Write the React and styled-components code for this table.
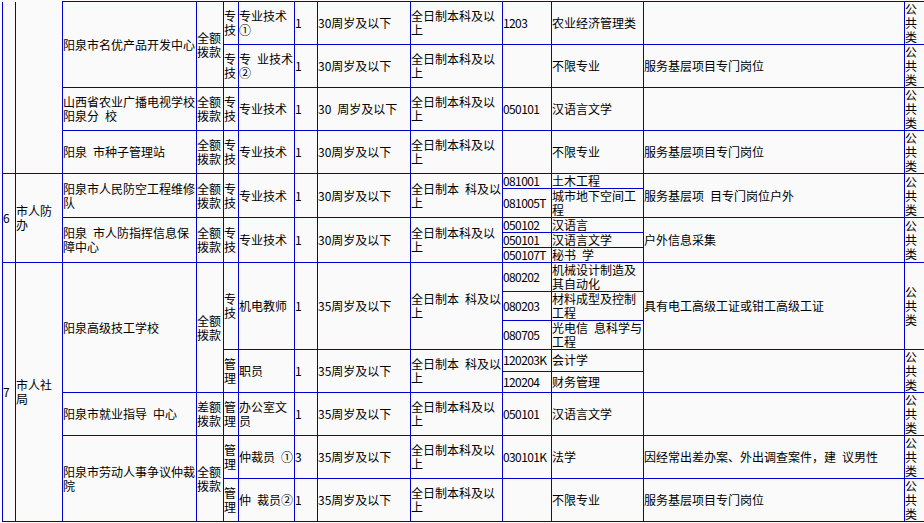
import React from "react";
import styled, { createGlobalStyle } from "styled-components";

const Global = createGlobalStyle`
  html, body {
    margin: 0;
    padding: 0;
    overflow: hidden;
    background: #fafafa;
  }
`;

const Page = styled.div`
  box-sizing: border-box;
  width: 924px;
  height: 523px;
  padding: 1px 0 0 2px;
  overflow: hidden;
  background: #fafafa;
`;

const Table = styled.table`
  border-collapse: collapse;
  table-layout: fixed;
  width: 942px;
  min-width: 942px;
  font-family: "Noto Sans CJK SC", "Noto Sans", sans-serif;
  font-size: 12px;
  line-height: 14px;
  color: #000;
`;

const Cell = styled.td`
  border: 1px solid #0000cc;
  border-top-style: ${(p) => (p.$noTop ? "none" : "solid")};
  padding: 0;
  vertical-align: middle;
  text-align: left;
  font-weight: 400;
  letter-spacing: ${(p) => (p.$code ? "-0.6px" : "0")};
  white-space: ${(p) => (p.$code ? "nowrap" : "normal")};
`;

const Narrow = styled.span`
  display: block;
  width: 14px;
`;

const S = "\u2002";

const widths = [13, 47, 134, 27, 15, 56, 23, 93, 92, 49, 92, 261, 40];

const isCode = (t) => /^[0-9]{4,}[A-Z]?$/.test(t);

const rows = [
  [
    { t: "", rs: 4, noTop: true },
    { t: "", rs: 4, noTop: true },
    { t: "阳泉市名优产品开发中心", rs: 2 },
    { t: "全额拨款", rs: 2 },
    "专技", "专业技术①", "1", "30周岁及以下", "全日制本科及以上", "1203", "农业经济管理类", "", "公共类",
  ],
  ["专技", `专${S}业技术②`, "1", "30周岁及以下", "全日制本科及以上", "", "不限专业", "服务基层项目专门岗位", "公共类"],
  [`山西省农业广播电视学校阳泉分${S}校`, "全额拨款", "专技", "专业技术", "1", `30${S}周岁及以下`, "全日制本科及以上", "050101", "汉语言文学", "", "公共类"],
  [`阳泉${S}市种子管理站`, "全额拨款", "专技", "专业技术", "1", "30周岁及以下", "全日制本科及以上", "", "不限专业", "服务基层项目专门岗位", "公共类"],
  [
    { t: "6", rs: 5 },
    { t: "市人防办", rs: 5 },
    { t: "阳泉市人民防空工程维修队", rs: 2 },
    { t: "全额拨款", rs: 2 },
    { t: "专技", rs: 2 },
    { t: "专业技术", rs: 2 },
    { t: "1", rs: 2 },
    { t: "30周岁及以下", rs: 2 },
    { t: `全日制本${S}科及以上`, rs: 2 },
    "081001", "土木工程",
    { t: `服务基层项${S}目专门岗位户外`, rs: 2 },
    { t: "公共类", rs: 2 },
  ],
  ["081005T", "城市地下空间工程"],
  [
    { t: `阳泉${S}市人防指挥信息保障中心`, rs: 3 },
    { t: "全额拨款", rs: 3 },
    { t: "专技", rs: 3 },
    { t: "专业技术", rs: 3 },
    { t: "1", rs: 3 },
    { t: "30周岁及以下", rs: 3 },
    { t: "全日制本科及以上", rs: 3 },
    "050102", "汉语言",
    { t: "户外信息采集", rs: 3 },
    { t: "公共类", rs: 3 },
  ],
  ["050101", "汉语言文学"],
  ["050107T", `秘书${S}学`],
  [
    { t: "7", rs: 8 },
    { t: "市人社局", rs: 8 },
    { t: "阳泉高级技工学校", rs: 5 },
    { t: "全额拨款", rs: 5 },
    { t: "专技", rs: 3 },
    { t: "机电教师", rs: 3 },
    { t: "1", rs: 3 },
    { t: "35周岁及以下", rs: 3 },
    { t: `全日制本${S}科及以上`, rs: 3 },
    "080202", "机械设计制造及其自动化",
    { t: "具有电工高级工证或钳工高级工证", rs: 3 },
    { t: "公共类", rs: 3 },
  ],
  ["080203", "材料成型及控制工程"],
  ["080705", `光电信${S}息科学与工程`],
  [
    { t: "管理", rs: 2 },
    { t: "职员", rs: 2 },
    { t: "1", rs: 2 },
    { t: "35周岁及以下", rs: 2 },
    { t: `全日制本${S}科及以上`, rs: 2 },
    "120203K", "会计学",
    { t: "", rs: 2 },
    { t: "公共类", rs: 2 },
  ],
  ["120204", "财务管理"],
  [`阳泉市就业指导${S}中心`, "差额拨款", "管理", "办公室文员", "1", "35周岁及以下", "全日制本科及以上", "050101", "汉语言文学", "", "公共类"],
  [
    { t: "阳泉市劳动人事争议仲裁院", rs: 2 },
    { t: "全额拨款", rs: 2 },
    "管理", `仲裁员${S}①`, "3", "35周岁及以下", "全日制本科及以上", "030101K", "法学",
    `因经常出差办案、外出调查案件，建${S}议男性`, "公共类",
  ],
  ["管理", `仲${S}裁员②`, "1", "35周岁及以下", "全日制本科及以上", "", "不限专业", "服务基层项目专门岗位", "公共类"],
];

export default function App() {
  return (
    <>
      <Global />
      <Page>
        <Table>
          <colgroup>
            {widths.map((w, i) => (
              <col key={i} style={{ width: w }} />
            ))}
          </colgroup>
          <tbody>
            {rows.map((r, ri) => (
              <tr key={ri}>
                {r.map((c, ci) => {
                  const cell = typeof c === "string" ? { t: c } : c;
                  const last = cell.t === "公共类";
                  return (
                    <Cell
                      key={ci}
                      rowSpan={cell.rs || 1}
                      $noTop={cell.noTop}
                      $code={isCode(cell.t)}
                    >
                      {last ? <Narrow>{cell.t}</Narrow> : cell.t}
                    </Cell>
                  );
                })}
              </tr>
            ))}
          </tbody>
        </Table>
      </Page>
    </>
  );
}
